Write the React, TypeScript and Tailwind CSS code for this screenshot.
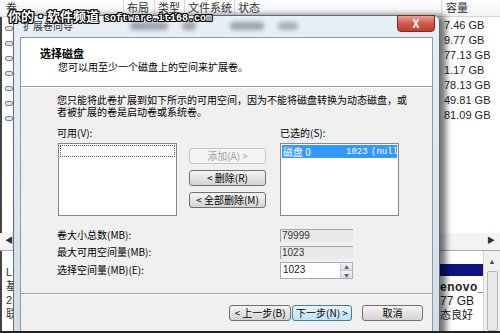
import React from "react";

const CAPACITIES = ["7.46 GB", "9.77 GB", "77.13 GB", "1.17 GB", "78.13 GB", "49.81 GB", "81.09 GB"];

function Background() {
  return (
    <div className="flex h-full flex-col font-['Liberation_Sans','Noto_Sans_CJK_SC',sans-serif] text-[11px]">
      {/* column headers */}
      <div className="flex h-[17px] border-b border-[#d5d5d5] bg-gradient-to-b from-white to-[#f1f2f4] text-[11px] leading-[17px] text-[#333]">
        <div className="w-[124px] border-r border-[#d5d5d5] pl-[6px]">卷</div>
        <div className="w-[31px] border-r border-[#d5d5d5] pl-[3px]">布局</div>
        <div className="w-[30px] border-r border-[#d5d5d5] pl-[3px]">类型</div>
        <div className="w-[50px] border-r border-[#d5d5d5] pl-[3px]">文件系统</div>
        <div className="w-[207px] border-r border-[#d5d5d5] pl-[3px]">状态</div>
        <div className="flex-1 pl-[4px]">容量</div>
      </div>

      {/* upper volume list */}
      <div className="flex h-[217px]">
        <div className="flex w-[13px] flex-col border-l-2 border-[#444] pt-[4px]">
          {CAPACITIES.map((c) => (
            <div key={c} className="flex h-[15px] items-center pl-[3px]">
              <div className="h-[5px] w-[8px] rounded-[2px] border border-[#7d8590] bg-[#dfe3e8]" />
            </div>
          ))}
        </div>
        <div className="flex-1" />
        <div className="flex w-[58px] flex-col pl-[2px] pt-[1px] text-[#222]">
          {CAPACITIES.map((c) => (
            <div key={c} className="h-[15px] leading-[15px]">{c}</div>
          ))}
        </div>
      </div>

      {/* horizontal scroll bar */}
      <div className="flex h-[18px] items-center justify-between border-b border-[#a8a8a8] bg-[#f3f3f3] px-[5px] text-[8px] text-[#333]">
        <span>◀</span>
        <span>▶</span>
      </div>

      {/* lower disk pane */}
      <div className="flex flex-1">
        <div className="flex w-[13px] flex-col border-l-2 border-[#444] pl-[4px] pt-[14px] text-[11px] leading-[14px] text-[#333]">
          <span>L</span>
          <span>基</span>
          <span>2</span>
          <span>联</span>
        </div>
        <div className="flex-1" />
        <div className="flex w-[46px] flex-col border-l border-[#999] bg-white pt-[13px]">
          <div className="h-[12px] bg-[#0a1582]" />
          <div className="pl-[2px] pt-[4px] text-[12px] font-bold leading-[14px] tracking-[0.5px] text-[#222]">enovo_</div>
          <div className="pl-[2px] text-[12px] leading-[14px] text-[#222]">77 GB</div>
          <div className="pl-[2px] text-[11px] leading-[14px] text-[#222]">态良好</div>
        </div>
        <div className="flex w-[17px] flex-col items-center border-l border-[#d5d5d5] bg-[#f0f0f0] pt-[6px] text-[7px] text-[#444]">
          <span>▲</span>
          <div className="mt-[4px] h-[60px] w-[11px] rounded-[2px] border border-[#b5b5b5] bg-[#e8e8e8]" />
        </div>
      </div>
    </div>
  );
}

function WinButton({
  children,
  disabled,
  focused,
  className = "",
}: {
  children: React.ReactNode;
  disabled?: boolean;
  focused?: boolean;
  className?: string;
}) {
  const look = disabled
    ? "border-[#c3c6c9] bg-[#f4f4f4] text-[#a0a0a0]"
    : focused
    ? "border-[#3c7fb1] bg-gradient-to-b from-[#eaf6fd] to-[#bfe1f6] text-black"
    : "border-[#707070] bg-gradient-to-b from-[#f4f4f4] to-[#d4d4d4] text-black";
  return (
    <div
      className={`flex h-[16px] items-center justify-center rounded-[3px] border text-[10px] leading-none ${look} ${className}`}
    >
      {children}
    </div>
  );
}

function Dialog() {
  return (
    <div className="absolute left-[13px] top-[15px] h-[322px] w-[427px] rounded-t-[6px] border border-[#5d6b7a] bg-gradient-to-b from-[#e9eff6] to-[#d3dde8] px-[6px] shadow-[6px_0_6px_rgba(0,0,0,0.55)]">
      {/* title bar */}
      <div className="relative h-[21px]">
        <div className="absolute left-[110px] top-[6px] flex gap-[14px] blur-[2px]">
          <span className="h-[8px] w-[38px] rounded-full bg-[#9aa2ab]" />
          <span className="h-[8px] w-[14px] rounded-full bg-[#9aa2ab]" />
          <span className="ml-[20px] h-[8px] w-[34px] rounded-full bg-[#9aa2ab]" />
          <span className="h-[8px] w-[20px] rounded-full bg-[#a6adb5]" />
        </div>
        <span className="absolute left-[3px] top-[4px] text-[10px] leading-[12px] text-[#333]">扩展卷向导</span>
      </div>
      <div className="absolute right-[4px] top-[-1px] flex h-[17px] w-[38px] items-center justify-center rounded-b-[4px] border border-[#7a2a22] bg-gradient-to-b from-[#e8a395] via-[#cd5a48] to-[#c23e2c] text-[11px] font-bold leading-none text-white">
        X
      </div>

      {/* client area */}
      <div className="h-[300px] border border-[#8c9aa9] bg-[#f0f0f0] text-[10px] leading-[12px] text-black">
        <div className="h-[49px] border-b border-[#a0a0a0] bg-white">
          <div className="pl-[19px] pt-[9px] text-[11px] font-bold leading-[13px]">选择磁盘</div>
          <div className="mt-[1px] pl-[37px]">您可以用至少一个磁盘上的空间来扩展卷。</div>
        </div>
        <div className="border-t border-white pl-[36px]">
          <div className="whitespace-nowrap pt-[6px]">
            <div>您只能将此卷扩展到如下所示的可用空间，因为不能将磁盘转换为动态磁盘，或</div>
            <div>者被扩展的卷是启动卷或系统卷。</div>
          </div>

          <div className="mt-[9px] flex">
            <div className="w-[223px]">可用(V):</div>
            <div>已选的(S):</div>
          </div>

          <div className="mt-[4px] flex">
            <div className="ml-[1px] h-[73px] w-[119px] border border-[#828790] bg-white p-[1px]">
              <div className="h-[12px] border border-dotted border-[#555]" />
            </div>
            <div className="ml-[12px] flex w-[77px] flex-col gap-[6px] pt-[5px]">
              <WinButton disabled>添加(A) &gt;</WinButton>
              <WinButton>&lt; 删除(R)</WinButton>
              <WinButton>&lt; 全部删除(M)</WinButton>
            </div>
            <div className="ml-[14px] h-[73px] w-[119px] border border-[#828790] bg-white p-[1px]">
              <div className="flex h-[13px] items-center whitespace-nowrap bg-[#3399ff] pl-[1px] text-white">
                <span className="w-[63px] shrink-0">磁盘 0</span>
                <span className="w-[25px] shrink-0 font-['Liberation_Mono',monospace] text-[9px]">1023</span>
                <span className="font-['Liberation_Mono',monospace] text-[9px]">(null</span>
              </div>
            </div>
          </div>

          <div className="mt-[12px] flex h-[14px] items-center">
            <div className="w-[223px]">卷大小总数(MB):</div>
            <div className="h-[13px] w-[73px] border-l border-t border-[#a5a5a5] bg-[#e9e9e9] pl-[1px] font-['Liberation_Sans',sans-serif] leading-[12px] text-[#333]">79999</div>
          </div>
          <div className="mt-[3px] flex h-[14px] items-center">
            <div className="w-[223px]">最大可用空间量(MB):</div>
            <div className="h-[13px] w-[73px] border-l border-t border-[#a5a5a5] bg-[#e9e9e9] pl-[1px] font-['Liberation_Sans',sans-serif] leading-[12px] text-[#333]">1023</div>
          </div>
          <div className="mt-[2px] flex h-[18px] items-center">
            <div className="w-[223px]">选择空间量(MB)(E):</div>
            <div className="flex h-[17px] w-[73px] items-center border border-[#abadb3] bg-white">
              <span className="flex-1 pl-[2px] font-['Liberation_Sans',sans-serif] text-[#222]">1023</span>
              <div className="flex h-full w-[12px] flex-col border-l border-[#c8c8c8]">
                <div className="flex flex-1 items-center justify-center border-b border-[#c8c8c8] bg-gradient-to-b from-[#f4f4f4] to-[#dcdcdc] text-[5px] leading-none text-[#4a6a8a]">▲</div>
                <div className="flex flex-1 items-center justify-center bg-gradient-to-b from-[#f4f4f4] to-[#dcdcdc] text-[5px] leading-none text-[#4a6a8a]">▼</div>
              </div>
            </div>
          </div>
        </div>

        <div className="mt-[14px] border-b border-[#a0a0a0]" />
        <div className="flex justify-end border-t border-white pr-[9px] pt-[10px]">
          <WinButton className="w-[62px]">&lt; 上一步(B)</WinButton>
          <WinButton focused className="ml-[1px] w-[60px]">下一步(N) &gt;</WinButton>
          <WinButton className="ml-[10px] w-[61px]">取消</WinButton>
        </div>
      </div>
    </div>
  );
}

function Watermark() {
  const outline =
    "[text-shadow:1px_1px_0_#000,-1px_-1px_0_#000,1px_-1px_0_#000,-1px_1px_0_#000,0_1px_0_#000,0_-1px_0_#000,1px_0_0_#000,-1px_0_0_#000]";
  return (
    <div className={`absolute left-[8px] top-[8px] flex items-baseline whitespace-nowrap text-white ${outline}`}>
      <span className="text-[13px] font-bold leading-[16px]">你的·软件频道</span>
      <span className="ml-[5px] font-['Liberation_Mono',monospace] text-[10px] font-bold leading-[16px]">software.it168.com</span>
    </div>
  );
}

export default function App() {
  return (
    <div className="relative h-[333px] w-[500px] overflow-hidden border-b-2 border-[#222] bg-white font-['Noto_Sans_CJK_SC',sans-serif]">
      <Background />
      <Dialog />
      <Watermark />
    </div>
  );
}
